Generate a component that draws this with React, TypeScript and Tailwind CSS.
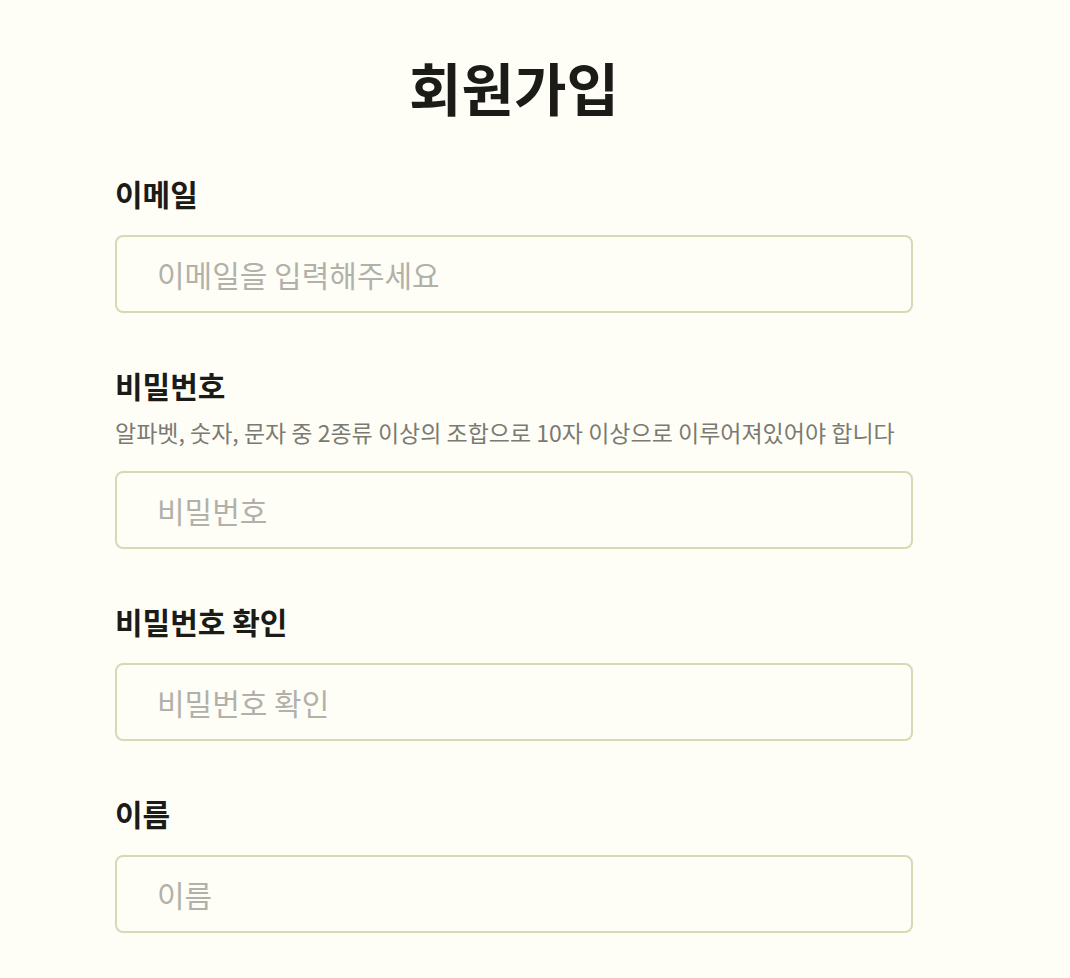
const fields = [
  { label: "이메일", placeholder: "이메일을 입력해주세요", type: "email" },
  {
    label: "비밀번호",
    placeholder: "비밀번호",
    type: "password",
    hint: "알파벳, 숫자, 문자 중 2종류 이상의 조합으로 10자 이상으로 이루어져있어야 합니다",
  },
  { label: "비밀번호 확인", placeholder: "비밀번호 확인", type: "password" },
  { label: "이름", placeholder: "이름", type: "text" },
];

export default function App() {
  return (
    <div
      className="min-h-screen bg-[#fefef7] text-[#1b1b18]"
      style={{ fontFamily: '"Noto Sans CJK KR", "Noto Sans", sans-serif' }}
    >
      <div className="ml-[115px] w-[798px] pt-[51px]">
        <h1 className="text-center text-[57px] font-bold leading-[70px]">회원가입</h1>

        <form className="mt-[54px] flex flex-col gap-[54px]">
          {fields.map((f) => (
            <div key={f.label} className="flex flex-col">
              <label className="text-[30px] font-bold leading-[36px]">{f.label}</label>
              {f.hint && (
                <p className="mt-[14px] whitespace-nowrap text-[23px] leading-[30px] text-[#7a7a72]">{f.hint}</p>
              )}
              <input
                type={f.type}
                placeholder={f.placeholder}
                className={`${f.hint ? "mt-[24px]" : "mt-[24px]"} h-[78px] w-[798px] rounded-[8px] border-2 border-[#d6dab4] bg-transparent px-[40px] text-[30px] outline-none placeholder:text-[#b1b1aa]`}
              />
            </div>
          ))}
        </form>
      </div>
    </div>
  );
}
